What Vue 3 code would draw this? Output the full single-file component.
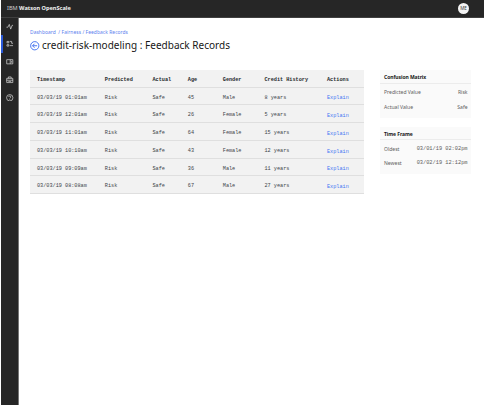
<script setup>
const heads = ['Timestamp', 'Predicted', 'Actual', 'Age', 'Gender', 'Credit History', 'Actions']
const rows = [
  ['03/03/19 01:01am', 'Risk', 'Safe', '45', 'Male', '8 years'],
  ['03/03/19 12:01am', 'Risk', 'Safe', '26', 'Female', '5 years'],
  ['03/03/19 11:01am', 'Risk', 'Safe', '64', 'Female', '15 years'],
  ['03/03/19 10:10am', 'Risk', 'Safe', '43', 'Female', '12 years'],
  ['03/03/19 09:09am', 'Risk', 'Safe', '36', 'Male', '11 years'],
  ['03/03/19 08:08am', 'Risk', 'Safe', '67', 'Male', '27 years'],
]
const cards = [
  { title: 'Confusion Matrix', mono: false, items: [['Predicted Value', 'Risk'], ['Actual Value', 'Safe']] },
  { title: 'Time Frame', mono: true, items: [['Oldest', '03/01/19 02:02pm'], ['Newest', '03/02/19 12:12pm']] },
]
</script>

<template>
  <div class="app">
    <header class="topbar">
      <div class="brand"><span>IBM</span> <b>Watson OpenScale</b></div>
      <div class="avatar">ME</div>
    </header>
    <div class="body">
      <nav class="side">
        <a class="nav"><svg viewBox="0 0 16 16"><path d="M1 9h3l3-6 3 10 3-8h2" /></svg></a>
        <a class="nav active"><svg viewBox="0 0 16 16"><path d="M2 3h4v3H2zM2 10h4v3H2zM8 3h4v4h3M8 12h7" /></svg></a>
        <a class="nav"><svg viewBox="0 0 16 16"><path d="M1.500 3.500h13v9h-13zM9 3.500v9M12 6v4" /></svg></a>
        <a class="nav"><svg viewBox="0 0 16 16"><path d="M1.500 5h13v9h-13zM5 5V2h6v3M1 9h14M5 11.500h6" /></svg></a>
        <a class="nav"><svg viewBox="0 0 16 16"><circle cx="8" cy="8" r="6.800" /><path d="M5.500 6.500C5.500 3.500 10.500 3.500 10.500 6.500 10.500 8 8 8 8 9.500M8 11v1.500" /></svg></a>
      </nav>
      <main class="main">
        <div class="crumbs"><span>Dashboard</span><span>/ Fairness / Feedback Records</span></div>
        <div class="heading">
          <svg viewBox="0 0 20 20"><circle cx="10" cy="10" r="8.700" /><path d="M15 10H5.500M9.500 5.800L5.300 10l4.200 4.200" /></svg>
          <h1>credit-risk-modeling : Feedback Records</h1>
        </div>
        <div class="content">
          <div class="table">
            <div class="row head"><span v-for="h in heads" :key="h">{{ h }}</span></div>
            <div v-for="r in rows" :key="r[0]" class="row">
              <span v-for="(c, i) in r" :key="i">{{ c }}</span>
              <a>Explain</a>
            </div>
          </div>
          <aside class="cards">
            <section v-for="c in cards" :key="c.title" class="card">
              <h2>{{ c.title }}</h2>
              <div v-for="it in c.items" :key="it[0]" class="item">
                <span>{{ it[0] }}</span><span :class="{ mono: c.mono }">{{ it[1] }}</span>
              </div>
            </section>
          </aside>
        </div>
      </main>
    </div>
  </div>
</template>

<style>
body { background: #fff; overflow: hidden; }
</style>
<style scoped>
* { box-sizing: border-box; }
.app { width: 484px; height: 405px; padding-left: 1px; font-family: "Noto Sans", sans-serif; color: #171717; display: flex; flex-direction: column; }
.topbar { height: 17.500px; flex: none; background: #262626; border-bottom: 1px solid #404040; display: flex; align-items: center; justify-content: space-between; padding: 0 15px 0 6px; color: #f3f3f3; }
.brand { font-size: 5.600px; line-height: 8px; white-space: nowrap; }
.brand span { color: #d0d0d0; }
.brand b { font-weight: 700; }
.avatar { width: 11px; height: 11px; border-radius: 50%; background: #f3f3f3; color: #333; font-size: 4.500px; line-height: 11px; text-align: center; }
.body { flex: 1; display: flex; min-height: 0; }
.side { width: 18px; background: #262626; border-right: 1px solid #777; flex: none; }
.nav { height: 17.800px; display: flex; align-items: center; justify-content: center; padding-left: 1px; }
.nav.active { box-shadow: inset 2px 0 #2a59d8; }
.nav svg { width: 7.500px; height: 7.500px; fill: none; stroke: #d8d8d8; stroke-width: 1.500; }
.main { flex: 1; padding: 11px 0 0 11px; }
.crumbs { display: flex; gap: 2.500px; height: 7px; line-height: 7px; font-size: 4.900px; letter-spacing: 0.060px; color: #5b80ee; white-space: nowrap; }
.heading { display: flex; align-items: center; gap: 3px; height: 14px; margin-top: 3px; }
.heading svg { width: 9.500px; height: 9.500px; position: relative; top: 0.500px; fill: none; stroke: #3f70ee; stroke-width: 2; flex: none; }
h1 { margin: -1px 0 0 -0.500px; font-size: 10px; letter-spacing: 0.020px; font-weight: 400; line-height: 14px; white-space: nowrap; }
.content { display: flex; gap: 16.500px; margin-top: 17.500px; align-items: flex-start; }
.table { width: 333.500px; background: #f2f2f2; font-family: "Liberation Mono", monospace; font-size: 5.200px; color: #3c4348; }
.row { display: grid; grid-template-columns: 67.800px 47.700px 35.300px 35px 41.700px 62.500px 1fr; height: 17.800px; padding-left: 7px; line-height: 21px; border-bottom: 1px solid #dfdfdf; white-space: nowrap; }
.head { color: #25292c; font-weight: 700; height: 17.500px; }
.row a { color: #4375f2; padding-top: 0.700px; }
.cards { width: 91px; display: flex; flex-direction: column; gap: 9px; }
.card { height: 47.500px; background: #fafafa; }
h2 { margin: 0 0 1.500px; height: 13.500px; line-height: 14.500px; padding-left: 4px; border-bottom: 1px solid #ececec; font-size: 5px; font-weight: 700; letter-spacing: -0.050px; }
.item { display: flex; justify-content: space-between; height: 14.700px; line-height: 15px; padding: 0 3.500px 0 4px; font-size: 5.050px; color: #606060; }
.mono { font-family: "Liberation Mono", monospace; font-size: 5.300px; }
</style>
